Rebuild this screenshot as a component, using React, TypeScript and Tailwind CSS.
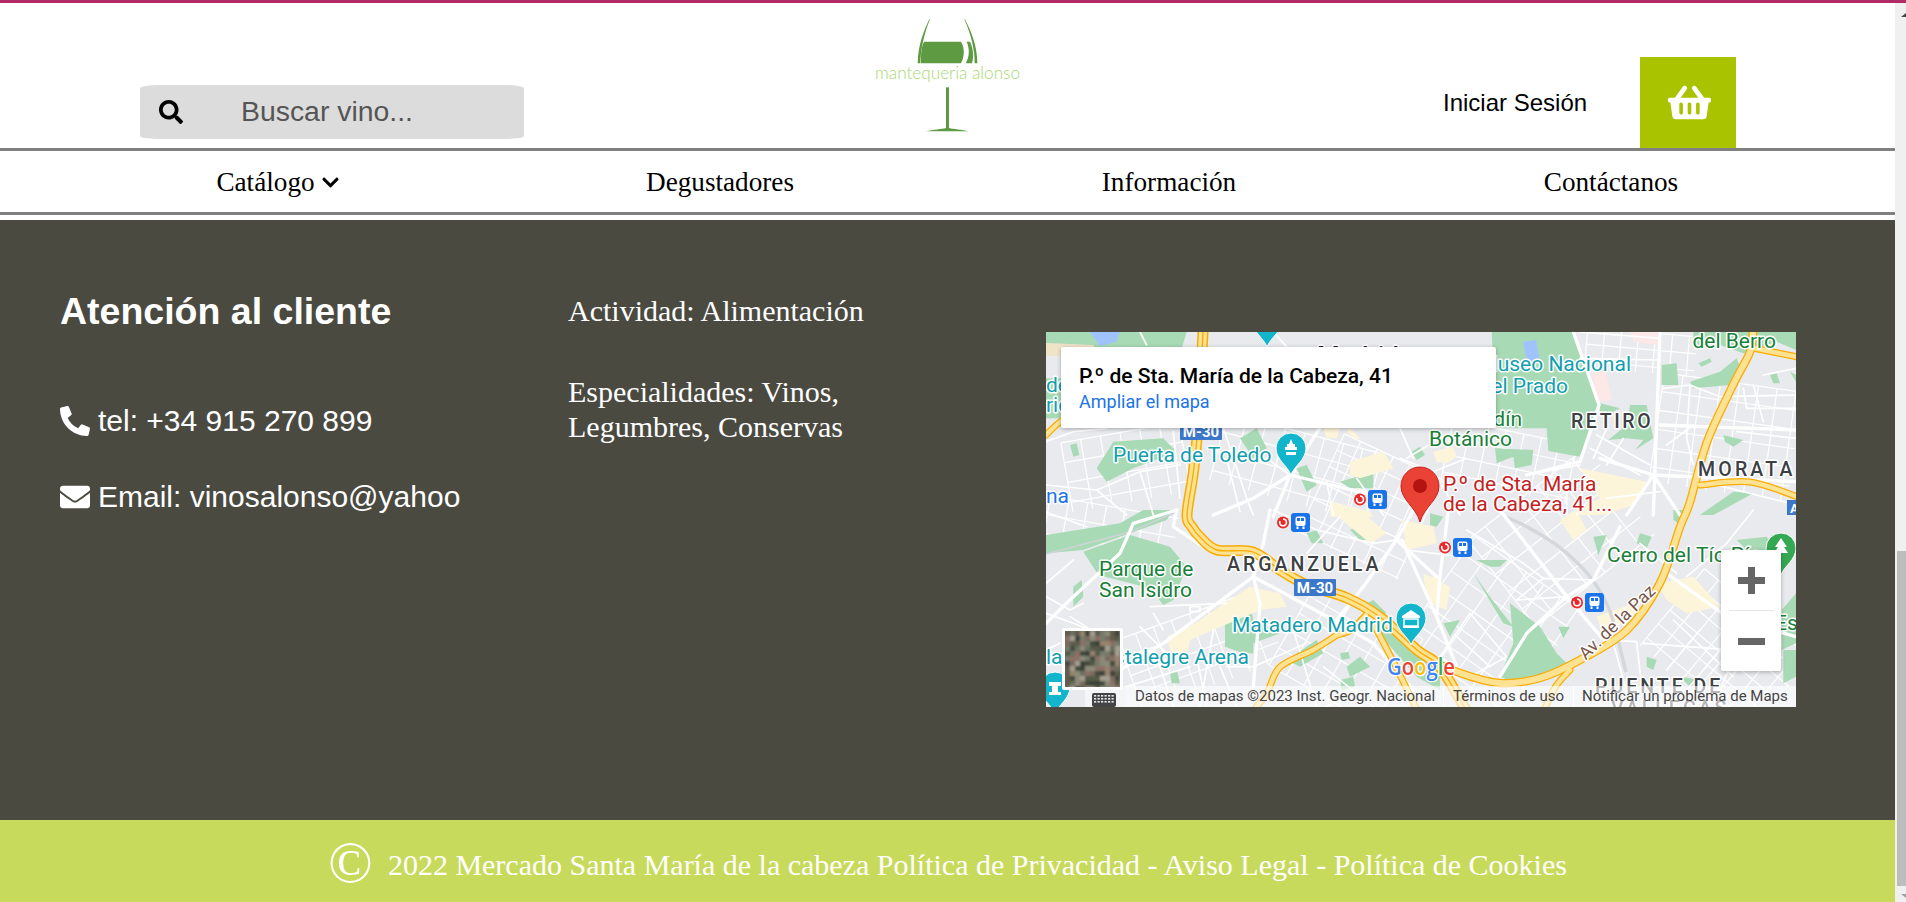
import React from "react";
import { FaSearch, FaPhoneAlt, FaEnvelope, FaChevronDown, FaShoppingBasket } from "react-icons/fa";

type Pt = [number, number];

const smooth = (s: string) => {
  const p: Pt[] = s.trim().split(/\s+/).map((q) => q.split(",").map(Number) as Pt);
  let d = `M${p[0][0]},${p[0][1]}`;
  for (let i = 0; i < p.length - 1; i++) {
    const a = p[Math.max(i - 1, 0)], b = p[i], c = p[i + 1], e = p[Math.min(i + 2, p.length - 1)];
    d += ` C${b[0] + (c[0] - a[0]) / 6},${b[1] + (c[1] - a[1]) / 6} ${c[0] - (e[0] - b[0]) / 6},${c[1] - (e[1] - b[1]) / 6} ${c[0]},${c[1]}`;
  }
  return d;
};

type Zone = { t: string; parks: string[]; yellow: string[]; thick: string[]; thin: string[] };

const zones: Zone[] = [
  {
    t: "translate(-6 -7) scale(.33333)",
    parks: [
      "18,21 440,21 425,70 18,70",
      "220,350 370,340 410,380 280,430 200,470 170,430",
      "90,360 110,355 118,390 100,395",
      "600,340 650,310 680,370 640,400",
      "800,420 830,480 800,500 770,430",
      "900,470 1000,440 1000,490 930,490",
      "18,160 63,160 63,280 18,280",
    ],
    yellow: [
      "850,308 900,308 890,340 860,340",
      "930,310 960,340 950,345 920,320",
      "930,410 1030,380 1060,430 960,460 930,450",
      "870,530 990,560 1000,575 870,575",
    ],
    thick: ["750,450 700,575", "750,450 1000,510", "520,570 640,520 750,450", "840,308 750,450"],
    thin: [
      "18,350 100,320 200,310",
      "18,480 170,495 300,440 420,420",
      "400,320 420,520",
      "550,308 620,520 640,570",
      "300,21 320,60",
      "700,21 740,65",
      "170,495 260,570",
      "300,440 340,570",
      "560,400 600,560",
      "680,400 750,450",
      "860,470 880,570",
      "950,460 1030,570",
      "1100,400 1200,340",
      "1080,310 1120,400",
    ],
  },
  {
    t: "translate(354 -7) scale(.33333)",
    parks: [
      "275,21 520,21 580,200 597,240 560,340 540,395 445,378 440,310 290,310",
      "285,370 400,375 395,420 345,430 340,395 290,415",
      "35,380 60,365 75,390 50,405",
      "690,240 740,240 760,340 705,375 730,345 680,340 625,345 680,300",
      "600,235 660,250 640,260 600,260",
      "785,120 830,115 835,180 785,180",
      "870,170 960,140 1010,100 1020,125 990,180 880,190",
      "880,21 1188,21 1188,75 1130,50 1060,75 1030,85 960,60 880,60",
      "895,115 930,100 935,110 905,125",
      "1110,150 1130,145 1140,175 1120,175",
      "1170,140 1188,150 1188,170",
      "970,330 1030,345 1000,365 975,350",
      "1000,500 1060,505 940,570 900,570",
    ],
    yellow: [
      "100,380 160,365 170,395 140,415 110,410",
      "540,430 740,470 700,540 610,570 500,570 600,520",
    ],
    thick: [
      "780,21 760,570",
      "520,21 597,240 540,410 380,450",
      "780,300 1188,315",
      "600,400 760,450 1188,470",
      "760,450 840,570",
      "760,450 680,570",
    ],
    thin: [
      "540,100 780,105",
      "790,190 870,180 960,215 1188,210",
      "870,180 860,340 880,420",
      "1030,190 1040,250 1188,250",
      "100,440 200,400",
      "0,400 100,440 180,570",
      "380,450 540,420",
      "590,330 750,420",
      "570,370 720,450",
      "620,310 580,400",
      "670,340 620,420",
      "540,21 780,40",
      "1090,150 1188,130",
      "1010,320 1188,340",
      "800,360 880,300",
      "950,480 1188,540",
      "1060,180 1090,290",
      "500,480 500,570",
      "560,450 530,570",
      "620,520 780,500",
    ],
  },
  {
    t: "translate(-6 178) scale(.33333)",
    parks: [
      "18,75 240,40 310,0 400,0 380,30 270,70 130,120 18,130",
      "130,125 270,75 390,110 440,170 400,270 370,285 330,235 175,195",
      "555,310 630,285 640,330 720,370 640,400 640,430 610,430 555,410",
      "100,230 125,210 130,260 100,290",
      "740,450 830,390 850,430 780,470",
      "900,430 925,425 930,445 905,450",
      "920,470 960,440 990,470 930,500",
      "1000,350 1110,390 1200,470 1200,540 1130,500",
      "960,290 1000,270 1040,310 1000,320",
      "800,70 830,60 850,100 815,100",
      "930,60 960,50 990,90 960,90",
      "390,490 410,480 420,520 395,520",
      "900,510 940,500 945,530 905,540",
    ],
    yellow: [
      "380,380 450,350 630,230 720,250 740,290 660,300 450,390 440,440 390,420",
      "870,0 960,0 1040,70 990,100",
      "1150,200 1200,200 1200,250 1160,250",
    ],
    thick: [
      "18,340 100,260 240,130 280,40 410,0",
      "410,0 400,50 520,130",
      "690,0 670,100 640,200",
      "640,200 370,400 240,480",
      "640,200 660,280 640,530",
      "640,200 880,330 1000,400 1120,540",
      "1120,0 1070,90 970,230 890,330",
      "1070,90 1190,200",
    ],
    thin: [
      "18,310 100,340 200,380",
      "330,290 560,280",
      "340,310 370,360",
      "200,430 180,520",
      "450,290 480,290 480,305 450,305 450,290",
      "18,420 60,400",
      "470,440 500,590",
      "520,360 480,590",
      "560,470 640,470 800,400",
      "260,530 450,470",
      "760,360 830,590",
      "18,220 100,150",
      "18,260 90,300 130,280",
      "90,320 250,420",
      "300,350 380,430",
      "700,0 830,60 1000,100",
      "900,20 800,130",
      "1000,100 1070,90",
      "850,470 1000,590",
      "950,540 860,590",
      "540,470 590,590",
      "350,440 400,590",
      "0,0 140,50",
    ],
  },
  {
    t: "translate(354 178) scale(.33333)",
    parks: [
      "330,280 420,350 470,430 510,470 350,520 300,500 340,400",
      "130,340 180,330 150,380",
      "230,150 320,150 300,170 270,170",
      "220,190 270,260 340,350 310,340",
      "580,80 620,75 595,135",
      "720,70 755,80 740,115 710,100",
      "820,0 870,0 850,50 820,30",
      "1010,90 1100,80 1140,150 1050,130",
      "1145,300 1188,250 1188,400 1145,420",
      "740,440 770,450 760,480 740,470",
      "810,260 870,290 860,300 810,270",
      "475,350 510,350 490,385",
      "1150,420 1188,420 1188,500 1150,520",
      "90,10 130,20 110,50 90,45",
      "840,500 900,510 870,530",
    ],
    yellow: [
      "5,30 100,50 110,100 20,120",
      "480,30 530,0 560,60 520,90",
      "770,220 880,200 960,290 860,310 800,270",
      "590,320 700,280 720,300 610,380",
      "70,190 150,230 140,300 90,280",
    ],
    thick: [
      "300,0 500,260 620,400",
      "660,50 580,210 500,260 380,370 300,500",
      "5,90 110,320 170,470",
      "110,320 120,200 145,0",
      "800,190 980,320 1188,380",
    ],
    thin: [
      "620,390 710,395 725,530",
      "500,260 350,270 430,205 580,210",
      "120,440 210,310 320,440 210,500 120,440",
      "165,375 270,470",
      "860,200 980,100 1060,0",
      "820,330 1000,500",
      "900,360 800,480",
      "960,420 860,540",
      "1040,360 950,560",
      "730,400 1140,430",
      "760,530 1000,560",
      "200,60 370,160 430,205",
      "20,120 180,140 220,110",
      "640,400 690,580",
      "720,100 830,190",
      "1000,300 1140,360",
    ],
  },
];

const highways = [
  "157,0 155,40 151,106 147,143 141,183 146,195 154,205 171,218 207,220 234,238 261,253 301,266 334,285 371,318 394,335 420,378",
  "354,302 380,325 414,341 454,351 494,346 534,328 581,298 614,251 634,195 644,170 661,110 687,53 704,20 707,0",
  "327,291 350,335 371,378",
  "291,303 267,318 234,335 221,361 208,378",
  "320,283 305,298 291,303",
  "654,153 704,150 752,165",
  "707,16 752,25",
  "0,103 14,90 30,82",
  "524,338 510,354 498,378",
];

// Blocks of minor streets: x, y, w, h, angle, step
const streetGrids: [number, number, number, number, number, number][] = [
  [610, 50, 140, 110, 8, 19],
  [400, 100, 130, 60, 12, 18],
  [440, 150, 150, 110, -38, 22],
  [610, 270, 140, 100, 40, 18],
  [80, 280, 150, 75, -20, 19],
  [170, 100, 160, 70, 15, 20],
  [270, 120, 110, 110, 25, 18],
  [380, 230, 130, 130, 35, 21],
  [20, 100, 120, 70, -10, 20],
  [240, 270, 120, 100, 30, 20],
  [540, 0, 110, 40, 5, 17],
  [0, 175, 130, 40, 10, 19],
];

function StreetGrid({ g }: { g: [number, number, number, number, number, number] }) {
  const [x, y, w, h, a, s] = g;
  const vs: number[] = [];
  for (let i = x; i <= x + w; i += s) vs.push(i);
  const hs: number[] = [];
  for (let i = y; i <= y + h; i += s) hs.push(i);
  return (
    <g transform={`rotate(${a} ${x + w / 2} ${y + h / 2})`} stroke="#fff" strokeWidth="1.2">
      {vs.map((v) => <line key={`v${v}`} x1={v} y1={y} x2={v} y2={y + h} />)}
      {hs.map((v) => <line key={`h${v}`} x1={x} y1={v} x2={x + w} y2={v} />)}
    </g>
  );
}

function Transit({ x, y }: { x: number; y: number }) {
  return (
    <g transform={`translate(${x} ${y})`}>
      <circle cx="-8" cy="9.5" r="6" fill="#ea2a2a" />
      <path d="M-11,8 a3.4,3.4 0 1 0 3,-2" fill="none" stroke="#fff" strokeWidth="1.6" />
      <rect width="19" height="19" rx="3" fill="#1a73e8" />
      <rect x="4.5" y="3.5" width="10" height="9.5" rx="2" fill="#fff" />
      <rect x="6" y="5" width="3" height="3" fill="#1a73e8" />
      <rect x="10" y="5" width="3" height="3" fill="#1a73e8" />
      <rect x="5.5" y="13.5" width="2" height="2.5" fill="#fff" />
      <rect x="11.5" y="13.5" width="2" height="2.5" fill="#fff" />
    </g>
  );
}

function Pin({ x, y, fill }: { x: number; y: number; fill: string }) {
  return (
    <path
      d={`M${x},${y + 27} C${x - 3},${y + 18} ${x - 15},${y + 12} ${x - 15},${y} a15,15 0 1 1 30,0 C${x + 15},${y + 12} ${x + 3},${y + 18} ${x},${y + 27}Z`}
      fill={fill}
      stroke="#fff"
      strokeWidth="1"
    />
  );
}

const satPalette = ["#5f5c4c", "#7a6a5e", "#8c6f66", "#434b3c", "#8b8a78", "#a39e90", "#6a705f", "#545a49", "#95836f", "#767b6b", "#3d4237"];

function Satellite() {
  const cells: React.ReactNode[] = [];
  for (let r = 0; r < 12; r++) {
    for (let c = 0; c < 12; c++) {
      const i = Math.abs(Math.floor(Math.sin(r * 12.9 + c * 78.2) * 4375)) % satPalette.length;
      cells.push(<rect key={`${r}-${c}`} x={c * 5} y={r * 5} width="5.2" height="5.2" fill={satPalette[i]} />);
    }
  }
  return (
    <svg x="19" y="299" width="55" height="56" viewBox="0 0 55 56">
      <defs>
        <filter id="sat-blur" x="-10%" y="-10%" width="120%" height="120%">
          <feGaussianBlur stdDeviation="1" />
        </filter>
      </defs>
      <rect width="55" height="56" fill="#6a6a5a" />
      <g filter="url(#sat-blur)">{cells}</g>
    </svg>
  );
}

function GoogleMap() {
  const label = { fontFamily: "Roboto, sans-serif", paintOrder: "stroke" as const, stroke: "#fff", strokeWidth: 3, strokeLinejoin: "round" as const };
  const teal = "#129eaf";
  const green = "#188038";
  const dark = "#3c4043";
  return (
    <div className="relative w-[750px] h-[375px] mt-[112px] overflow-hidden shrink-0 bg-[#e8eaed]">
      <svg width="750" height="375" viewBox="0 0 750 375" className="block">
        <rect width="750" height="375" fill="#e8eaed" />
        {streetGrids.map((g, i) => <StreetGrid key={i} g={g} />)}
        {zones.map((z, i) => (
          <g key={i} transform={z.t}>
            {z.parks.map((p, j) => <polygon key={j} points={p} fill="#a8dab5" />)}
            {z.yellow.map((p, j) => <polygon key={j} points={p} fill="#fdf5da" />)}
          </g>
        ))}
        <polygon points="44,0 74,0 70,10 54,14" fill="#a0c3ff" />
        <polygon points="0,11 48,13 45,24 0,24" fill="#f0e4c8" />
        <polygon points="477,10 490,8 494,30 482,33" fill="#a0c3ff" />
        <polygon points="546,40 560,40 566,68 552,70" fill="#fce8e6" />
        <polygon points="584,0 614,0 612,13 588,10" fill="#fce8e6" />
        <polyline points="0,222 84,200 130,180" fill="none" stroke="#cfd3d8" strokeWidth="1.5" />
        <path d="M460,185 C520,210 560,250 570,300 L580,340" fill="none" stroke="#d4d7dc" strokeWidth="3.5" />
        {zones.map((z, i) => (
          <g key={i} transform={z.t} fill="none" stroke="#fff" strokeLinejoin="round" strokeLinecap="round">
            {z.thin.map((p, j) => <polyline key={j} points={p} strokeWidth="5" />)}
            {z.thick.map((p, j) => <polyline key={j} points={p} strokeWidth="10" />)}
          </g>
        ))}
        <g fill="none" strokeLinecap="round" strokeLinejoin="round">
          {highways.map((h, i) => (
            <path key={i} d={smooth(h)} stroke="#f9ab00" strokeWidth={i === 0 ? 11 : i === 1 ? 8.5 : 7} />
          ))}
          {highways.map((h, i) => (
            <path key={i} d={smooth(h)} stroke="#fde293" strokeWidth={i === 0 ? 8 : i === 1 ? 6 : 4.5} />
          ))}
          <path d={smooth(highways[0])} stroke="#f9ab00" strokeWidth="1.3" />
        </g>

        <rect x="134" y="91" width="42" height="17" rx="1" fill="#3b78c9" />
        <text x="155" y="105" textAnchor="middle" fontSize="15" fontWeight="700" fill="#fff" fontFamily="Roboto, sans-serif">M-30</text>
        <rect x="248" y="247" width="42" height="17" rx="1" fill="#3b78c9" />
        <text x="269" y="261" textAnchor="middle" fontSize="15" fontWeight="700" fill="#fff" fontFamily="Roboto, sans-serif">M-30</text>
        <rect x="741" y="168" width="12" height="15" fill="#3b78c9" />
        <text x="744" y="181" fontSize="13" fontWeight="700" fill="#fff" fontFamily="Roboto, sans-serif">A</text>

        <g fontSize="21" {...label}>
          <text x="312" y="33" textAnchor="middle" fontSize="26" fontWeight="500" fill="#202124">Madrid</text>
          <text x="67" y="130" fill={teal}>Puerta de Toledo</text>
          <text x="585" y="39" textAnchor="end" fill={teal}>Museo Nacional</text>
          <text x="522" y="61" textAnchor="end" fill={teal}>del Prado</text>
          <text x="730" y="16" textAnchor="end" fill={green}>del Berro</text>
          <text x="476" y="94" textAnchor="end" fill={green}>Jardín</text>
          <text x="383" y="114" fill={green}>Botánico</text>
          <text x="0" y="171" fill="#1a73e8">na</text>
          <text x="0" y="60" fill={teal}>de</text>
          <text x="0" y="80" fill={teal}>ric</text>
          <text x="53" y="244" fill={green}>Parque de</text>
          <text x="53" y="265" fill={green}>San Isidro</text>
          <text x="186" y="300" fill={teal}>Matadero Madrid</text>
          <text x="203" y="332" textAnchor="end" fill={teal}>Vistalegre Arena</text>
          <text x="0" y="332" fill={teal}>la</text>
          <text x="561" y="230" fill={green}>Cerro del Tío Pío</text>
          <text x="729" y="298" fill={green}>Est</text>
          <text x="397" y="159" fontSize="21" fill="#c5221f">P.º de Sta. María</text>
          <text x="397" y="179" fontSize="21" fill="#c5221f">de la Cabeza, 41...</text>
          <text x="525" y="96" fontSize="19.5" fontWeight="500" letterSpacing="2.6" fill={dark}>RETIRO</text>
          <text x="652" y="144" fontSize="19.5" fontWeight="500" letterSpacing="3.2" fill={dark}>MORATA</text>
          <text x="181" y="239" fontSize="19.5" fontWeight="500" letterSpacing="3" fill={dark}>ARGANZUELA</text>
          <text x="549" y="361" fontSize="19.5" fontWeight="500" letterSpacing="3" fill={dark}>PUENTE DE</text>
          <text x="565" y="383" fontSize="19.5" fontWeight="500" letterSpacing="3" fill={dark}>VALLECAS</text>
          <text x="571" y="296" textAnchor="middle" fontSize="17.5" fill="#795548" transform="rotate(-44 571 290)">Av. de la Paz</text>
        </g>

        <Pin x={221} y={-12} fill="#12b5cb" />
        <Pin x={245} y={116} fill="#12b5cb" />
        <path d="M245,107 l2,5 h2 v3 h2 v3 h-12 v-3 h2 v-3 h2Z M240,120 h10 v3 h-10Z" fill="#fff" />
        <Pin x={365} y={286} fill="#12b5cb" />
        <path d="M356,284 L365,278 L374,284 V286 H356Z M357,294 h16 v2 h-16Z" fill="#fff" />
        <rect x="358" y="287" width="14" height="7" fill="none" stroke="#fff" strokeWidth="1.5" />
        <Pin x={735} y={216} fill="#34a853" />
        <path d="M735,206 l6,9 h-3 l4,6 h-14 l4,-6 h-3Z" fill="#fff" />
        <Pin x={9} y={355} fill="#12b5cb" />
        <path d="M3,350 h12 v4 h-3 v6 h3 v3 h-12 v-3 h3 v-6 h-3Z" fill="#fff" />

        <Transit x={322} y={158} />
        <Transit x={245} y={181} />
        <Transit x={407} y={206} />
        <Transit x={539} y={261} />

        <path d="M374,190 C370,175 355,168 355,154 a19,19 0 1 1 38,0 C393,168 378,175 374,190Z" fill="#ea4335" stroke="#c5221f" strokeWidth="1" />
        <circle cx="374" cy="154" r="7" fill="#b31412" />

        <text x="341" y="343" fontSize="23" fontWeight="600" fontFamily="'Open Sans', sans-serif" textLength="68" lengthAdjust="spacingAndGlyphs" stroke="#fff" strokeWidth="2.5" paintOrder="stroke" strokeLinejoin="round">
          <tspan fill="#4285f4">G</tspan>
          <tspan fill="#ea4335">o</tspan>
          <tspan fill="#fbbc05">o</tspan>
          <tspan fill="#4285f4">g</tspan>
          <tspan fill="#34a853">l</tspan>
          <tspan fill="#ea4335">e</tspan>
        </text>

        <rect x="79" y="354" width="671" height="21" fill="#fff" fillOpacity=".62" />
        <g fontFamily="Roboto, sans-serif" fontSize="15" fill="#444">
          <text x="89" y="369">Datos de mapas ©2023 Inst. Geogr. Nacional</text>
          <text x="407" y="369">Términos de uso</text>
          <text x="536" y="369">Notificar un problema de Maps</text>
        </g>
        <rect x="397" y="354" width="1" height="21" fill="#fff" />
        <rect x="527" y="354" width="1" height="21" fill="#fff" />

        <g>
          <rect x="39" y="354" width="40" height="21" fill="#fff" fillOpacity=".5" />
          <rect x="46" y="361" width="24" height="14" rx="2" fill="#444" />
          {[0, 1, 2].map((r) =>
            [0, 1, 2, 3, 4, 5].map((c) => (
              <rect key={`${r}${c}`} x={48 + c * 3.5} y={363 + r * 3} width="2.2" height="1.6" fill="#e8eaed" />
            ))
          )}
        </g>

        <rect x="16" y="296" width="61" height="62" rx="2" fill="#fff" />
        <Satellite />
      </svg>

      <div className="absolute left-[15px] top-[15px] w-[435px] h-[81px] bg-white rounded-[2px] shadow-[0_1px_4px_rgba(0,0,0,0.3)] pl-[18px] pt-[16px] flex flex-col font-['Roboto',sans-serif]">
        <span className="text-[21px] leading-[26px] font-medium text-black whitespace-nowrap">P.º de Sta. María de la Cabeza, 41</span>
        <span className="text-[18px] leading-[22px] mt-[2px] text-[#1a73e8]">Ampliar el mapa</span>
      </div>

      <div className="absolute left-[675px] top-[218px] w-[60px] h-[121px] bg-white rounded-[2px] shadow-[0_1px_4px_rgba(0,0,0,0.3)] flex flex-col items-center">
        <div className="h-[60px] flex items-center justify-center">
          <svg width="27" height="27" viewBox="0 0 27 27"><path d="M10,0h7v10h10v7H17v10h-7V17H0v-7h10Z" fill="#666" /></svg>
        </div>
        <div className="w-[45px] h-px bg-[#e6e6e6]" />
        <div className="h-[60px] flex items-center justify-center">
          <svg width="27" height="7" viewBox="0 0 27 7"><rect width="27" height="7" fill="#666" /></svg>
        </div>
      </div>
    </div>
  );
}

function Logo() {
  return (
    <svg width="200" height="137" viewBox="0 9 600 411" className="block shrink-0 ml-[326px] self-start">
      <path d="M238,58 C222,92 205,130 203,190 L211,190 C212,150 222,100 240,58Z" fill="#5d9a42" />
      <path d="M345,58 C362,92 382,135 382,190 L374,190 C375,150 362,100 343,58Z" fill="#5d9a42" />
      <path d="M222,125 H333 C342,140 346,165 333,190 H213 C212,165 214,140 222,125Z" fill="#5d9a42" />
      <path d="M350,125 H360 C370,145 372,170 366,190 H347 C358,170 360,148 350,125Z" fill="#5d9a42" />
      <rect x="288" y="262" width="9" height="124" fill="#5d9a42" />
      <path d="M228,394 C250,388 275,388 288,384 H297 C310,388 335,388 357,394Z" fill="#5d9a42" />
      <text x="75" y="238" fontSize="50" fontWeight="300" fontFamily="Lato, sans-serif" fill="#a8d873" textLength="435" lengthAdjust="spacingAndGlyphs">mantequeria alonso</text>
    </svg>
  );
}

function Scrollbar() {
  return (
    <div className="w-[11px] shrink-0 bg-[#f0f0f0] flex flex-col relative">
      <div className="h-[548px] pt-[10px] pl-[6px]">
        <svg width="5" height="4" viewBox="0 0 5 4"><path d="M5,0 V4 H0Z" fill="#444" /></svg>
      </div>
      <div className="ml-[2px] h-[335px] bg-[#bdbdbd]" />
      <div className="pt-[8px] pl-[6px]">
        <svg width="5" height="4" viewBox="0 0 5 4"><path d="M0,0 H5 V4Z" fill="#a0a0a0" /></svg>
      </div>
    </div>
  );
}

export default function App() {
  return (
    <div className="w-[1906px] h-[902px] overflow-hidden bg-white flex flex-col font-['Liberation_Sans',Arial,sans-serif]">
      <div className="h-[3px] bg-[#b32b66] shrink-0" />
      <div className="flex flex-1 min-h-0">
        <div className="w-[1895px] flex flex-col">
          <header className="h-[145px] flex shrink-0">
            <div className="ml-[140px] mb-[9px] self-end w-[384px] h-[54px] bg-[#dcdcdc] rounded-[20px/3px] flex items-center pl-[19px] pb-[1px] shrink-0">
              <FaSearch className="text-black" size={24} />
              <span className="ml-[58px] text-[28.4px] text-[#555]">Buscar vino...</span>
            </div>
            <Logo />
            <span className="ml-[393px] self-center mt-[55px] text-[24px] leading-[30px] text-black whitespace-nowrap shrink-0 w-[144px]">Iniciar Sesión</span>
            <div className="ml-[53px] self-end w-[96px] h-[91px] bg-[#a9c300] flex items-center justify-center pl-[2px] shrink-0">
              <FaShoppingBasket className="text-white" size={43} />
            </div>
          </header>

          <nav className="h-[67px] border-y-[3px] border-[#808080] grid grid-cols-[442px_442px_456px_428px] items-center pl-[57px] pt-[2px] shrink-0 font-['Liberation_Serif',serif] text-[27.2px] text-black">
            <div className="flex items-center justify-center gap-[6px]">
              <span>Catálogo</span>
              <FaChevronDown size={19} />
            </div>
            <div className="text-center">Degustadores</div>
            <div className="text-center">Información</div>
            <div className="text-center">Contáctanos</div>
          </nav>

          <div className="h-[5px] shrink-0" />

          <footer className="h-[600px] bg-[#4a4a41] flex pl-[60px] text-white shrink-0">
            <div className="w-[508px] shrink-0 pt-[67px]">
              <h2 className="text-[37.5px] leading-[48px] font-bold">Atención al cliente</h2>
              <div className="mt-[69px] flex items-center gap-[8px] text-[30px] leading-[34px]">
                <FaPhoneAlt size={30} />
                <span>tel: +34 915 270 899</span>
              </div>
              <div className="mt-[42px] flex items-center gap-[8px] text-[30px] leading-[34px]">
                <FaEnvelope size={30} />
                <span>Email: vinosalonso@yahoo</span>
              </div>
            </div>
            <div className="w-[478px] shrink-0 pt-[73px] font-['Liberation_Serif',serif] text-[30px] leading-[35px]">
              <p>Actividad: Alimentación</p>
              <p className="mt-[46px] w-[330px]">Especialidades: Vinos, Legumbres, Conservas</p>
            </div>
            <GoogleMap />
          </footer>

          <div className="flex-1 bg-[#c8da5c] flex items-center justify-center pt-[6px] font-['Liberation_Serif',serif] text-white text-[30px]">
            <span className="text-[59px] leading-[59px] mr-[15px] -mt-[4px]">©</span>
            <span>2022 Mercado Santa María de la cabeza Política de Privacidad - Aviso Legal - Política de Cookies</span>
          </div>
        </div>
        <Scrollbar />
      </div>
    </div>
  );
}
